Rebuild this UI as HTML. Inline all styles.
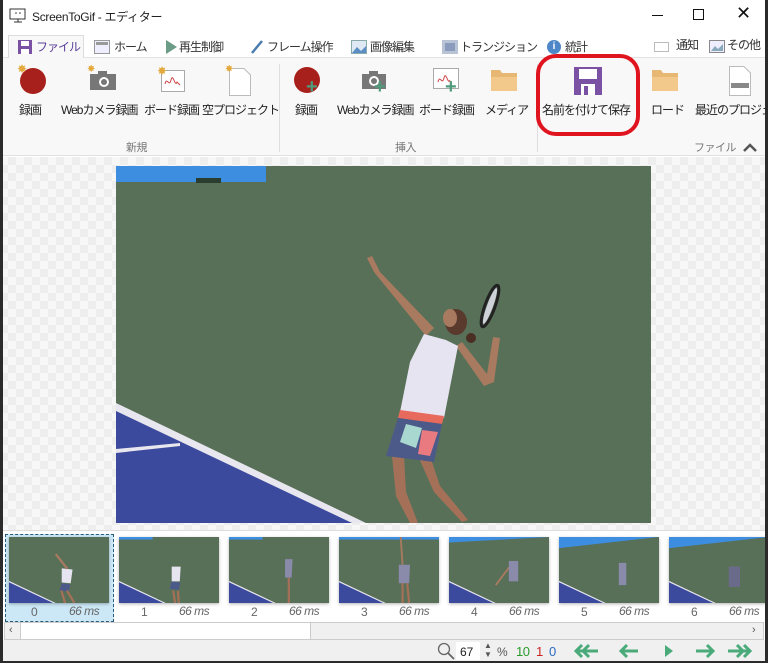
<!DOCTYPE html>
<html><head><meta charset="utf-8">
<style>
*{margin:0;padding:0;box-sizing:border-box}
body{width:768px;height:663px;overflow:hidden;background:#2b2b2b;font-family:"Liberation Sans","Noto Sans CJK JP",sans-serif;position:relative}
.win{position:absolute;left:0;top:0;width:768px;height:661px;background:#fff;overflow:hidden}
.abs{position:absolute}
.t{position:absolute;font-size:12px;color:#222;white-space:nowrap}
.tab{position:absolute;top:38px;font-size:12px;letter-spacing:-1px;color:#333;white-space:nowrap}
.lbl{position:absolute;top:101px;font-size:12px;letter-spacing:-1px;color:#222;white-space:nowrap}
.grp{position:absolute;top:139px;font-size:11px;color:#777;letter-spacing:-0.5px}
.thumb{position:absolute;top:537px;width:100px;height:66px;overflow:hidden;box-shadow:0 1px 3px rgba(0,0,0,.3)}
.num{position:absolute;top:605px;font-size:12px;color:#666}
.ms{position:absolute;top:604px;font-size:12px;color:#666;font-style:italic;letter-spacing:-0.5px}
</style></head><body>
<div class="win">
<!-- title bar -->
<svg class="abs" style="left:9px;top:8px" width="18" height="16"><rect x="1" y="1" width="15" height="10" fill="none" stroke="#333"/><path d="M5 14h8M9 11v3" stroke="#333"/><circle cx="7" cy="5" r=".8" fill="#333"/><circle cx="11" cy="5" r=".8" fill="#333"/></svg>
<div class="t" style="left:32px;top:8px;font-size:12px;letter-spacing:-0.3px">ScreenToGif - エディター</div>
<div class="abs" style="left:652px;top:15px;width:11px;height:1px;background:#111"></div>
<div class="abs" style="left:693px;top:9px;width:11px;height:11px;border:1px solid #111"></div>
<div class="t" style="left:736px;top:3px;font-size:18px;color:#111">✕</div>
<!-- tabs row -->
<div class="abs" style="left:0;top:34px;width:768px;height:24px;background:#fff;border-bottom:1px solid #e3e3e3"></div>
<div class="abs" style="left:8px;top:35px;width:76px;height:24px;background:#f8f8f8;border:1px solid #dcdcdc;border-bottom:none"></div>
<svg class="abs" style="left:18px;top:40px" width="14" height="14"><rect x="0" y="0" width="14" height="14" fill="#7b52a3"/><rect x="3" y="1" width="8" height="5" fill="#fff"/><rect x="3" y="9" width="8" height="5" fill="#fff"/></svg>
<div class="tab" style="left:36px;color:#5b3f9a">ファイル</div>
<svg class="abs" style="left:94px;top:40px" width="16" height="14"><rect x=".5" y=".5" width="15" height="13" fill="#eef" stroke="#999"/><rect x="2" y="2" width="12" height="3" fill="#999"/></svg>
<div class="tab" style="left:114px">ホーム</div>
<svg class="abs" style="left:166px;top:40px" width="11" height="14"><path d="M0 0L11 7L0 14Z" fill="#6a9c88"/></svg>
<div class="tab" style="left:179px">再生制御</div>
<svg class="abs" style="left:250px;top:39px" width="14" height="16"><path d="M2 14L12 2" stroke="#4a7cb0" stroke-width="2.5"/></svg>
<div class="tab" style="left:267px">フレーム操作</div>
<svg class="abs" style="left:351px;top:40px" width="16" height="14"><rect x=".5" y=".5" width="15" height="13" fill="#dfe9f3" stroke="#8aa"/><path d="M1 13L6 7L10 11L15 6V13Z" fill="#5b8ec5"/></svg>
<div class="tab" style="left:370px">画像編集</div>
<svg class="abs" style="left:442px;top:40px" width="16" height="14"><rect x="0" y="0" width="16" height="14" fill="#b8c4d6"/><rect x="3" y="3" width="10" height="8" fill="#8a9bbb"/></svg>
<div class="tab" style="left:460px">トランジション</div>
<div class="abs" style="left:547px;top:40px;width:14px;height:14px;border-radius:50%;background:#4d87c7;color:#fff;font-size:10px;text-align:center;line-height:14px;font-weight:bold">i</div>
<div class="tab" style="left:565px">統計</div>
<div class="abs" style="left:654px;top:42px;width:15px;height:10px;border:1px solid #bbb"></div>
<div class="tab" style="left:676px;top:36px">通知</div>
<svg class="abs" style="left:709px;top:40px" width="16" height="13"><rect x=".5" y=".5" width="15" height="12" fill="#eef" stroke="#888"/><path d="M2 11L6 6L9 9L14 4V11Z" fill="#8ab"/></svg>
<div class="tab" style="left:727px;top:36px">その他</div>
<!-- ribbon -->
<div class="abs" style="left:0;top:58px;width:768px;height:98px;background:#f8f8f8;border-bottom:1px solid #e0e0e0"></div>
<div class="abs" style="left:279px;top:64px;width:1px;height:88px;background:#dedede"></div>
<div class="abs" style="left:537px;top:64px;width:1px;height:88px;background:#dedede"></div>
<div class="abs" style="left:20px;top:68px;width:26px;height:26px;border-radius:50%;background:#a8201c"></div>
<div class="t" style="left:17px;top:62px;color:#e4a93c;font-size:12px">✸</div>
<svg class="abs" style="left:90px;top:70px" width="26" height="20"><rect x="0" y="4" width="26" height="16" fill="#777"/><rect x="8" y="1" width="9" height="4" fill="#777"/><circle cx="14" cy="12" r="5" fill="#fff"/><circle cx="14" cy="12" r="3" fill="#777"/></svg>
<div class="t" style="left:87px;top:64px;color:#e4a93c;font-size:10px">✸</div>
<svg class="abs" style="left:161px;top:70px" width="24" height="22"><rect x=".5" y=".5" width="23" height="21" fill="#fff" stroke="#aaa"/><path d="M4 14C6 6 8 18 10 10S14 18 16 12L19 15" stroke="#c44" fill="none"/></svg>
<div class="t" style="left:157px;top:64px;color:#e4a93c;font-size:12px">✸</div>
<svg class="abs" style="left:229px;top:68px" width="22" height="28"><path d="M.5 .5H15L21.5 7V27.5H.5Z" fill="#fff" stroke="#bbb"/></svg>
<div class="t" style="left:225px;top:64px;color:#e4a93c;font-size:10px">✸</div>
<div class="lbl" style="left:19px">録画</div>
<div class="lbl" style="left:61px">Webカメラ録画</div>
<div class="lbl" style="left:144px">ボード録画</div>
<div class="lbl" style="left:202px">空プロジェクト</div>
<div class="grp" style="left:126px">新規</div>
<div class="abs" style="left:294px;top:67px;width:26px;height:26px;border-radius:50%;background:#a8201c"></div>
<div class="t" style="left:306px;top:76px;color:#4f9a7a;font-size:20px;font-weight:bold">+</div>
<svg class="abs" style="left:362px;top:70px" width="26" height="20"><rect x="0" y="4" width="24" height="15" fill="#777"/><rect x="7" y="1" width="9" height="4" fill="#777"/><circle cx="12" cy="11" r="5" fill="#fff"/><circle cx="12" cy="11" r="3" fill="#777"/></svg>
<div class="t" style="left:374px;top:76px;color:#4f9a7a;font-size:20px;font-weight:bold">+</div>
<svg class="abs" style="left:433px;top:68px" width="28" height="24"><rect x=".5" y=".5" width="25" height="20" fill="#fff" stroke="#aaa"/><path d="M5 14C7 6 9 18 11 10S15 18 17 12" stroke="#c44" fill="none"/></svg>
<div class="t" style="left:445px;top:76px;color:#4f9a7a;font-size:20px;font-weight:bold">+</div>
<svg class="abs" style="left:490px;top:68px" width="28" height="24"><path d="M1 2H10L12 5H27V23H1Z" fill="#e7b873"/><path d="M1 9H27V23H1Z" fill="#f2c98a"/></svg>
<div class="lbl" style="left:295px">録画</div>
<div class="lbl" style="left:337px">Webカメラ録画</div>
<div class="lbl" style="left:419px">ボード録画</div>
<div class="lbl" style="left:485px">メディア</div>
<div class="grp" style="left:395px">挿入</div>
<svg class="abs" style="left:574px;top:67px" width="28" height="28"><path d="M0 0H28V28H0Z" fill="#7b52a3"/><rect x="5" y="2" width="18" height="10" fill="#fff"/><rect x="7" y="17" width="14" height="11" fill="#fff"/><rect x="10" y="19" width="4" height="9" fill="#7b52a3"/></svg>
<div class="lbl" style="left:542px">名前を付けて保存</div>
<div class="abs" style="left:536px;top:54px;width:104px;height:82px;border:4px solid #e0141e;border-radius:20px"></div>
<svg class="abs" style="left:651px;top:68px" width="28" height="24"><path d="M1 2H10L12 5H27V23H1Z" fill="#e7b873"/><path d="M1 9H27V23H1Z" fill="#f2c98a"/></svg>
<div class="lbl" style="left:651px">ロード</div>
<svg class="abs" style="left:729px;top:66px" width="22" height="30"><path d="M.5 .5H15L21.5 7V29.5H.5Z" fill="#fff" stroke="#bbb"/><rect x="2" y="17" width="18" height="5" fill="#888"/></svg>
<div class="lbl" style="left:695px">最近のプロジェ</div>
<div class="grp" style="left:694px">ファイル</div>
<svg class="abs" style="left:743px;top:143px" width="14" height="9"><path d="M1 8L7 2L13 8" stroke="#555" stroke-width="2.5" fill="none"/></svg>
<!-- canvas -->
<div class="abs" style="left:0;top:157px;width:768px;height:373px;background-color:#f7f7f7;background-image:linear-gradient(45deg,#eee 25%,transparent 25%,transparent 75%,#eee 75%),linear-gradient(45deg,#eee 25%,transparent 25%,transparent 75%,#eee 75%);background-size:16px 16px;background-position:0 0,8px 8px"></div>
<svg class="abs" style="left:116px;top:166px" width="535" height="357" viewBox="0 0 535 357">
<rect width="535" height="357" fill="#587058"/>
<rect width="150" height="16" fill="#3d8de0"/>
<rect x="80" y="12" width="25" height="5" fill="#2a3d30"/>
<polygon points="0,243 247,357 0,357" fill="#3b4a9c"/>
<polygon points="0,237 250,357 236,357 0,245" fill="#e8e6ee"/>
<polygon points="0,283 64,277 64,280 0,287" fill="#e8e6ee"/>
<path d="M276 290L280 330L294 357L302 357L290 326L288 290Z" fill="#a57058"/>
<path d="M302 290L318 326L346 356L352 354L324 320L314 290Z" fill="#a57058"/>
<path d="M251 92L258 106L310 170L318 162L264 106L256 90Z" fill="#a87a60"/>
<path d="M340 180L368 220L378 216L384 172L377 171L371 208L346 176Z" fill="#a87a60"/>
<ellipse cx="374" cy="140" rx="5" ry="22" transform="rotate(20 374 140)" fill="none" stroke="#222" stroke-width="3"/>
<ellipse cx="374" cy="140" rx="3" ry="19" transform="rotate(20 374 140)" fill="#cfd2d8"/>
<polygon points="308,168 330,174 342,180 328,252 284,246 294,196" fill="#e6e4f0"/>
<polygon points="284,244 328,250 326,258 282,252" fill="#e86a5c"/>
<polygon points="282,252 326,258 318,296 270,290" fill="#4c5a8a"/>
<polygon points="290,258 306,262 300,282 284,276" fill="#a8d8d0"/>
<polygon points="306,264 322,266 314,290 302,288" fill="#e87a80"/>
<ellipse cx="340" cy="156" rx="11" ry="13" fill="#5a3a2c"/>
<ellipse cx="334" cy="152" rx="7" ry="9" fill="#a87a60"/>
<circle cx="355" cy="172" r="5" fill="#4a2e22"/>
</svg>
<!-- filmstrip -->
<div class="abs" style="left:0;top:530px;width:768px;height:92px;background:#fff;border-top:1px solid #ddd"></div>
<div class="abs" style="left:5px;top:534px;width:109px;height:88px;background:#cce8f6;border:1px dashed #2a5a7a"></div>
<div class="thumb" style="left:9px"><svg width="100" height="66" viewBox="0 0 535 357" preserveAspectRatio="none"><rect width="535" height="357" fill="#587058"/><polygon points="0,243 247,357 0,357" fill="#3b4a9c"/><polygon points="0,237 250,357 236,357 0,245" fill="#e8e6ee"/><polygon points="282,170 340,176 330,250 282,246" fill="#e6e4f0"/><polygon points="282,250 328,256 320,296 270,290" fill="#4c5a8a"/><path d="M250 92L312 172" stroke="#a87a60" stroke-width="12"/><path d="M280 290L300 357M310 290L350 357" stroke="#a57058" stroke-width="12"/></svg></div>
<div class="thumb" style="left:119px"><svg width="100" height="66" viewBox="0 0 535 357" preserveAspectRatio="none"><rect width="535" height="357" fill="#587058"/><rect width="180" height="14" fill="#3d8de0"/><polygon points="0,243 247,357 0,357" fill="#3b4a9c"/><polygon points="0,237 250,357 236,357 0,245" fill="#e8e6ee"/><polygon points="282,160 330,160 325,240 282,240" fill="#e6e4f0"/><polygon points="282,240 328,246 320,286 270,280" fill="#4c5a8a"/><path d="M290 290L300 357M315 290L320 357" stroke="#a57058" stroke-width="12"/></svg></div>
<div class="thumb" style="left:229px"><svg width="100" height="66" viewBox="0 0 535 357" preserveAspectRatio="none"><rect width="535" height="357" fill="#587058"/><rect width="180" height="14" fill="#3d8de0"/><polygon points="0,243 247,357 0,357" fill="#3b4a9c"/><polygon points="0,237 250,357 236,357 0,245" fill="#e8e6ee"/><polygon points="300,120 340,120 335,220 300,220" fill="#8a8aaa"/><path d="M320 220L320 357" stroke="#a57058" stroke-width="12"/></svg></div>
<div class="thumb" style="left:339px"><svg width="100" height="66" viewBox="0 0 535 357" preserveAspectRatio="none"><rect width="535" height="357" fill="#587058"/><rect width="535" height="14" fill="#3d8de0"/><polygon points="0,243 247,357 0,357" fill="#3b4a9c"/><polygon points="0,237 250,357 236,357 0,245" fill="#e8e6ee"/><path d="M330 0L340 150" stroke="#a87a60" stroke-width="10"/><polygon points="320,150 380,150 375,250 320,250" fill="#8a8aaa"/><path d="M340 250L340 357M365 250L375 357" stroke="#a57058" stroke-width="12"/></svg></div>
<div class="thumb" style="left:449px"><svg width="100" height="66" viewBox="0 0 535 357" preserveAspectRatio="none"><rect width="535" height="357" fill="#587058"/><polygon points="0,30 535,0 0,0" fill="#3d8de0"/><polygon points="0,243 247,357 0,357" fill="#3b4a9c"/><polygon points="0,237 250,357 236,357 0,245" fill="#e8e6ee"/><path d="M340 140L250 260" stroke="#a87a60" stroke-width="10"/><polygon points="320,130 370,130 370,240 320,240" fill="#8a8aaa"/></svg></div>
<div class="thumb" style="left:559px"><svg width="100" height="66" viewBox="0 0 535 357" preserveAspectRatio="none"><rect width="535" height="357" fill="#587058"/><polygon points="0,60 535,0 0,0" fill="#3d8de0"/><polygon points="0,243 247,357 0,357" fill="#3b4a9c"/><polygon points="0,237 250,357 236,357 0,245" fill="#e8e6ee"/><polygon points="320,140 360,140 360,260 320,260" fill="#8a8aaa"/></svg></div>
<div class="thumb" style="left:669px;width:97px"><svg width="100" height="66" viewBox="0 0 535 357" preserveAspectRatio="none"><rect width="535" height="357" fill="#587058"/><polygon points="0,60 535,0 0,0" fill="#3d8de0"/><polygon points="0,243 247,357 0,357" fill="#3b4a9c"/><polygon points="0,237 250,357 236,357 0,245" fill="#e8e6ee"/><polygon points="320,160 380,160 380,270 320,270" fill="#6a6a8a"/></svg></div>
<div class="num" style="left:31px">0</div><div class="ms" style="left:69px">66 ms</div>
<div class="num" style="left:141px">1</div><div class="ms" style="left:179px">66 ms</div>
<div class="num" style="left:251px">2</div><div class="ms" style="left:289px">66 ms</div>
<div class="num" style="left:361px">3</div><div class="ms" style="left:399px">66 ms</div>
<div class="num" style="left:471px">4</div><div class="ms" style="left:509px">66 ms</div>
<div class="num" style="left:581px">5</div><div class="ms" style="left:619px">66 ms</div>
<div class="num" style="left:691px">6</div><div class="ms" style="left:729px">66 ms</div>
<!-- scrollbar -->
<div class="abs" style="left:4px;top:622px;width:760px;height:18px;background:#f0f0f0;border:1px solid #ccc"></div>
<div class="abs" style="left:20px;top:623px;width:291px;height:16px;background:#fff;border-left:1px solid #ccc;border-right:1px solid #ccc"></div>
<div class="t" style="left:9px;top:624px;font-size:11px;color:#555">‹</div>
<div class="t" style="left:752px;top:624px;font-size:11px;color:#555">›</div>
<!-- status -->
<div class="abs" style="left:0;top:640px;width:768px;height:21px;background:#f0f0f0"></div>
<svg class="abs" style="left:437px;top:642px" width="18" height="18"><circle cx="7" cy="7" r="5.5" fill="none" stroke="#666" stroke-width="1.3"/><path d="M11 11L17 17" stroke="#666" stroke-width="1.8"/></svg>
<div class="abs" style="left:456px;top:642px;width:24px;height:18px;background:#fff"></div>
<div class="t" style="left:460px;top:645px">67</div>
<div class="t" style="left:484px;top:641px;font-size:8px;color:#555;line-height:9px">▲<br>▼</div>
<div class="t" style="left:497px;top:645px;color:#555">%</div>
<div class="t" style="left:516px;top:644px;color:#2a9a2a;font-size:13px;letter-spacing:-0.5px">10</div>
<div class="t" style="left:536px;top:644px;color:#c22;font-size:13px">1</div>
<div class="t" style="left:549px;top:644px;color:#2a6ac2;font-size:13px">0</div>
<svg class="abs" style="left:572px;top:643px" width="190" height="16"><g fill="none" stroke="#4aaa7a" stroke-width="3"><path d="M10 2L4 8L10 14M17 2L11 8L17 14M4 8H26"/><path d="M55 2L49 8L55 14M49 8H66"/><path d="M135 2L141 8L135 14M124 8H141"/><path d="M172 2L178 8L172 14M165 2L171 8L165 14M156 8H178"/></g><path d="M93 2L101 8L93 14Z" fill="#4aaa7a"/></svg>
<!-- window edges -->
<div class="abs" style="left:0;top:0;width:3px;height:663px;background:#2b2b2b"></div>
<div class="abs" style="left:765px;top:0;width:3px;height:663px;background:#2b2b2b"></div>
</div>
</body></html>
